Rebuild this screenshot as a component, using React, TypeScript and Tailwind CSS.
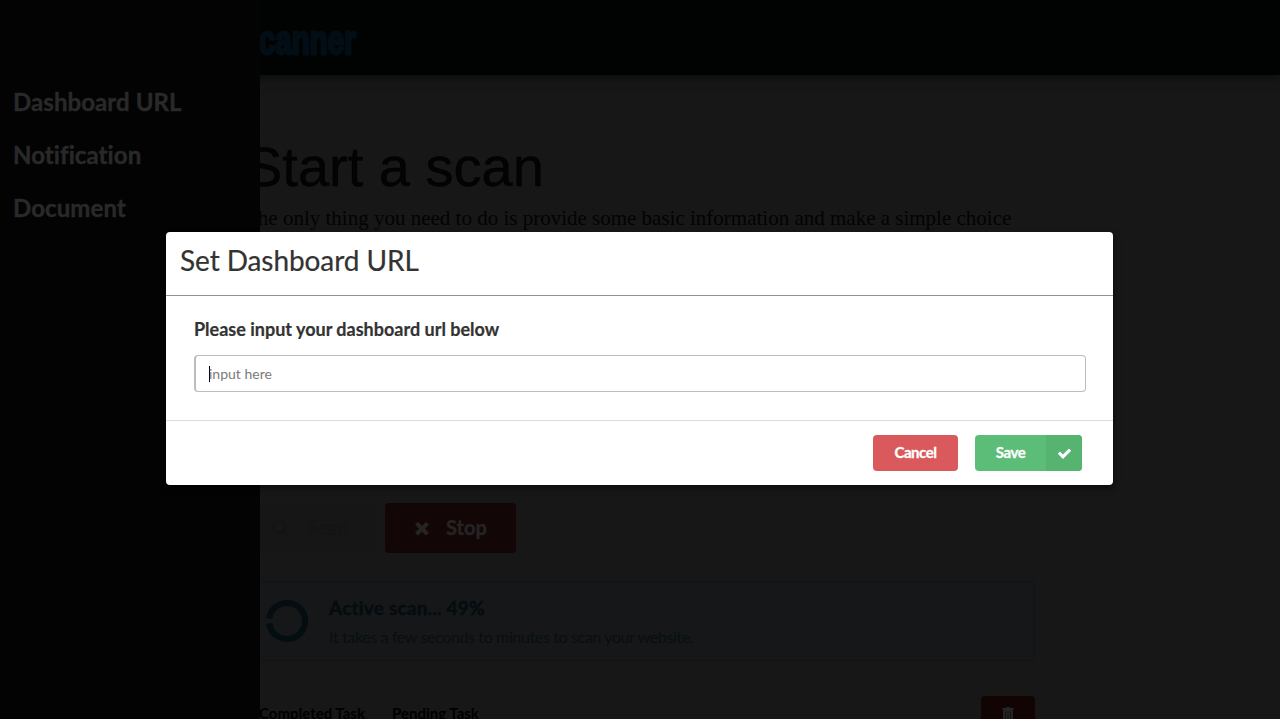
const menuItems = ["Dashboard URL", "Notification", "Document"];

function CheckIcon() {
  return (
    <svg viewBox="0 0 1792 1792" className="h-[15px] w-[15px]" fill="currentColor">
      <path d="M1671 566q0 40-28 68l-724 724-136 136q-28 28-68 28t-68-28l-136-136-362-362q-28-28-28-68t28-68l136-136q28-28 68-28t68 28l294 295 656-657q28-28 68-28t68 28l136 136q28 28 28 68z" />
    </svg>
  );
}

function CloseIcon() {
  return (
    <svg viewBox="0 0 1792 1792" className="h-[20px] w-[20px]" fill="currentColor">
      <path d="M1490 1322q0 40-28 68l-136 136q-28 28-68 28t-68-28l-294-294-294 294q-28 28-68 28t-68-28l-136-136q-28-28-28-68t28-68l294-294-294-294q-28-28-28-68t28-68l136-136q28-28 68-28t68 28l294 294 294-294q28-28 68-28t68 28l136 136q28 28 28 68t-28 68l-294 294 294 294q28 28 28 68z" />
    </svg>
  );
}

function SearchIcon() {
  return (
    <svg viewBox="0 0 18 18" className="h-[18px] w-[18px]" fill="none" stroke="currentColor" strokeWidth="2.4">
      <circle cx="8" cy="7.8" r="6" />
      <path d="M12.6 12.4l3.4 3.4" strokeLinecap="round" />
    </svg>
  );
}

function TrashIcon() {
  return (
    <svg viewBox="0 0 12 14" className="h-[14px] w-[12px]" fill="currentColor">
      <path d="M4.2 0h3.6v1H12v1H0V1h4.2z" />
      <path fillRule="evenodd" d="M1 2H11V14H1zM3.2 4v8.5h.6V4zM5.7 4v8.5h.6V4zM8.2 4v8.5h.6V4z" />
    </svg>
  );
}

function Sidebar() {
  return (
    <aside className="absolute inset-y-0 left-0 w-[260px] bg-[#030303] pt-[75px]">
      <nav>
        {menuItems.map((item) => (
          <div
            key={item}
            className="flex h-[53px] items-center border-t border-[#050505] pl-[13px] text-[24px] leading-[30px] font-bold tracking-[0.08px] text-[#292929] [-webkit-text-stroke:0.4px_#292929]"
          >
            {item}
          </div>
        ))}
      </nav>
    </aside>
  );
}

function Page() {
  return (
    <div className="flex h-full flex-col">
      <header className="flex h-[75px] shrink-0 items-center bg-[#010303] pl-[156px] shadow-[0_2px_10px_rgba(0,0,0,0.6)]">
        <div className="flex w-[200px] justify-end pt-[5px]">
          <span className="origin-right scale-x-[0.74] font-['Liberation_Sans',sans-serif] text-[40px] leading-none font-bold whitespace-nowrap text-[#030d15] [-webkit-text-stroke:3px_#030d15]">
            Scanner
          </span>
        </div>
      </header>
      <main className="ml-[245px] flex w-[790px] flex-1 flex-col">
        <h1 className="mt-[60px] font-['Liberation_Sans',sans-serif] text-[56px] leading-[64px] whitespace-nowrap text-[#030303] [-webkit-text-stroke:0.4px_#030303]">
          Start a scan
        </h1>
        <p className="mt-[5px] font-['Liberation_Serif',serif] text-[21px] leading-[28px] whitespace-nowrap text-[#030303]">
          The only thing you need to do is provide some basic information and make a simple choice
        </p>
        <div className="mt-[271px] flex gap-2">
          <div className="flex h-[50px] w-[132px] items-center rounded bg-[#161616] pl-[26px] text-[20px] font-bold text-[#141414]">
            <SearchIcon />
            <span className="-mt-0.5 ml-[18px] tracking-[-0.2px]">Scan</span>
          </div>
          <div className="flex h-[50px] w-[131px] items-center rounded bg-[#130607] pl-[27px] text-[20px] font-bold text-[#242424]">
            <CloseIcon />
            <span className="-mt-0.5 ml-[14px] [-webkit-text-stroke:0.4px_#242424]">Stop</span>
          </div>
        </div>
        <section className="mt-[28px] flex h-[80px] items-center rounded border border-[#101416] bg-[#151719] pl-5">
          <svg viewBox="0 0 42 42" className="h-[42px] w-[42px]" fill="none" stroke="#040d0f" strokeWidth="6">
            <path d="M3.2 18.5a18 18 0 1 1 0 5" />
          </svg>
          <div className="ml-[21px]">
            <div className="pt-px text-[19px] leading-[24px] font-bold tracking-[0.2px] text-[#040c0f] [-webkit-text-stroke:0.3px_#040c0f]">
              Active scan... 49%
            </div>
            <p className="mt-[6px] text-[16px] leading-[22px] tracking-[-0.37px] text-[#080f11]">
              It takes a few seconds to minutes to scan your website.
            </p>
          </div>
        </section>
        <div className="mt-[35px] flex text-[15px] font-bold text-black">
          <div className="flex w-[133px] pt-[7px] pl-[14px] leading-[20px] whitespace-nowrap">Completed Task</div>
          <div className="flex flex-1 pt-[7px] pl-[14px] leading-[20px]">Pending Task</div>
          <div className="flex h-[36px] w-[54px] justify-center rounded bg-[#130404] pt-[11px] text-[#242424]">
            <TrashIcon />
          </div>
        </div>
      </main>
    </div>
  );
}

function Modal() {
  return (
    <div className="absolute top-[232px] left-[166px] flex h-[253px] w-[947px] flex-col rounded bg-white text-[#333333] shadow-[1px_3px_6px_rgba(0,0,0,0.5)]">
      <header className="h-[64px] border-b border-[#939393] pt-[9px] pl-[14px] text-[28px] leading-[38px] tracking-[-0.08px] [-webkit-text-stroke:0.2px_#333333]">
        Set Dashboard URL
      </header>
      <div className="h-[124px] pt-[21px] pr-[27px] pl-[28px]">
        <label className="block text-[18px] leading-[24px] font-bold [-webkit-text-stroke:0.2px_#333333]">
          Please input your dashboard url below
        </label>
        <div className="mt-[14px] flex h-[37px] items-center rounded border border-l-2 border-[#bcbcbc] pl-[13px] text-[14px] text-[#7b7b7b]">
          <span className="-mr-px h-[16px] w-px bg-black" />
          <span>input here</span>
        </div>
      </div>
      <footer className="flex flex-1 justify-end border-t border-[#dcdcdc] pt-[14px] pr-[31px] text-[15px] font-bold tracking-[-0.45px] text-white">
        <button className="h-[36px] w-[85px] rounded bg-[#d9595c] pb-px [-webkit-text-stroke:0.3px_white]">Cancel</button>
        <button className="ml-[17px] flex h-[36px] w-[107px] overflow-hidden rounded bg-[#5bbd77]">
          <span className="w-[71px] self-center pb-px [-webkit-text-stroke:0.3px_white]">Save</span>
          <span className="flex h-full w-[36px] items-center justify-center bg-[#56b370]">
            <CheckIcon />
          </span>
        </button>
      </footer>
    </div>
  );
}

export default function App() {
  return (
    <div className="relative h-[719px] w-[1280px] overflow-hidden bg-[#171717] font-['Lato',sans-serif] [font-variant-ligatures:none]">
      <Page />
      <Sidebar />
      <Modal />
    </div>
  );
}
